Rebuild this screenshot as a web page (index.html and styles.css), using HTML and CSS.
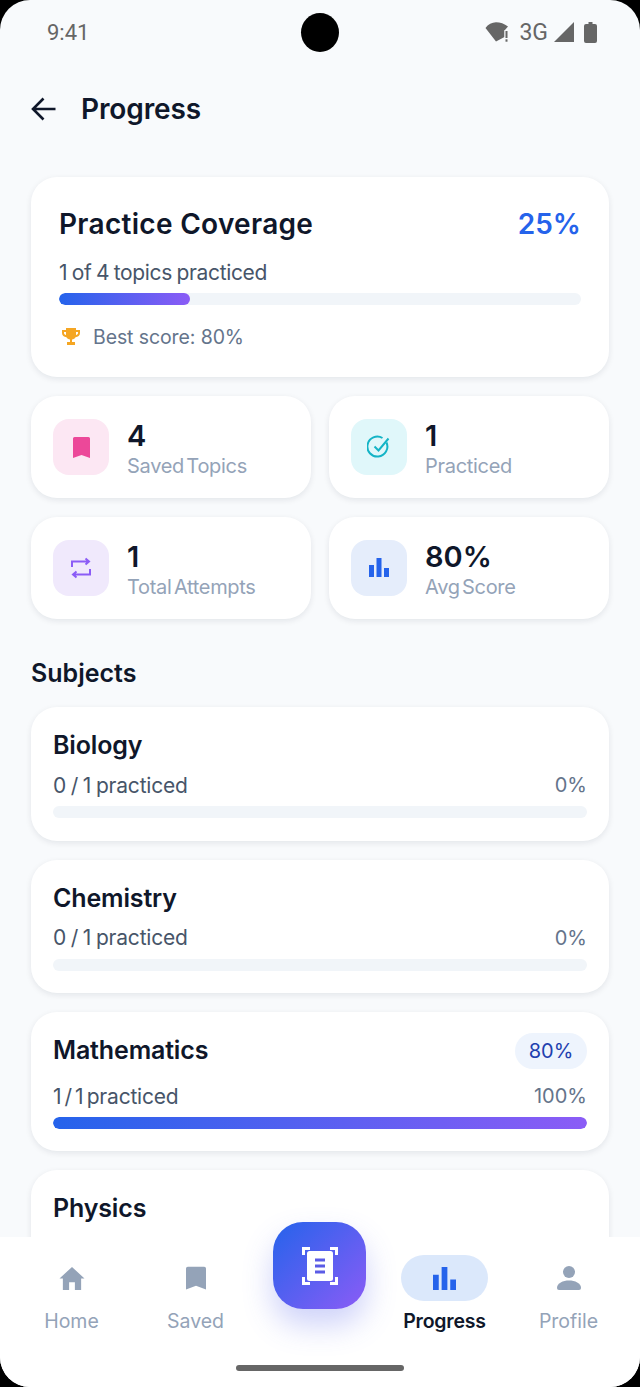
FILE: index.html
```html
<!DOCTYPE html>
<html lang="en">
<head>
<meta charset="utf-8">
<title>Progress</title>
<link rel="stylesheet" href="styles.css">
</head>
<body>
<div class="screen">
  <div class="status">
    <span class="time">9:41</span>
    <span class="camera"></span>
    <span class="status-icons">
      <svg class="wifi" width="24" height="20" viewBox="0 0 24 20"><path d="M0.500 6C3 2.500 7 0.300 11 0.300S19.500 1.800 23 4.500L19.500 8.500V15L11 19.500Z" fill="#666"/><path d="M19.500 8H24V20H19.500Z" fill="#f8fafc"/><rect x="20.500" y="9" width="2" height="7" fill="#666"/><rect x="20.500" y="17.300" width="2" height="2.400" fill="#666"/></svg>
      <span class="network">3G</span>
      <svg class="signal" width="20" height="20" viewBox="0 0 20 20"><path d="M20 0V20H0Z" fill="#666"/></svg>
      <svg class="battery" width="13" height="21" viewBox="0 0 13 21"><path d="M4.500 0H8.500V2H11Q13 2 13 4V19Q13 21 11 21H2Q0 21 0 19V4Q0 2 2 2H4.500Z" fill="#666"/></svg>
    </span>
  </div>
  <main class="content">
    <header class="page-head">
      <svg class="back" width="26" height="26" viewBox="0 0 26 26"><path d="M24.500 13H3M12.500 2.500 2 13l10.500 10.500" fill="none" stroke="#0f172a" stroke-width="2.600"/></svg>
      <h1>Progress</h1>
    </header>

    <section class="card hero">
      <div class="hero-top"><h2>Practice Coverage</h2><span class="hero-pct">25%</span></div>
      <p class="hero-sub">1 of 4 topics practiced</p>
      <div class="track hero-track"><div class="fill" style="width:25%"></div></div>
      <div class="best">
        <svg width="18" height="20" viewBox="0 0 18 20"><path d="M4 1H14V3H18V6C18 8.500 16 10 13.500 10.200 12.800 11.500 11.500 12.300 10 12.600V15H13V18H5V15H8V12.600C6.500 12.300 5.200 11.500 4.500 10.200 2 10 0 8.500 0 6V3H4ZM2 5V6C2 7 2.800 7.800 4 8.100V5ZM16 5H14V8.100C15.200 7.800 16 7 16 6Z" fill="#f5a623"/></svg>
        <span>Best score: 80%</span>
      </div>
    </section>

    <section class="stats">
      <div class="card stat">
        <span class="stat-icon pink"><svg width="17" height="21" viewBox="0 0 17 21"><path d="M1.500 0H15.500Q17 0 17 1.500V21L8.500 18 0 21V1.500Q0 0 1.500 0Z" fill="#ec4899"/></svg></span>
        <div class="stat-text"><strong>4</strong><span>Saved Topics</span></div>
      </div>
      <div class="card stat">
        <span class="stat-icon cyan"><svg width="24" height="24" viewBox="0 0 24 24"><path d="M19.500 7.500A10 10 0 1 1 15.500 3" fill="none" stroke="#14b4c6" stroke-width="2"/><path d="M7.500 11.500 11.500 15.500 21.500 3.500" fill="none" stroke="#14b4c6" stroke-width="2"/></svg></span>
        <div class="stat-text"><strong>1</strong><span>Practiced</span></div>
      </div>
      <div class="card stat">
        <span class="stat-icon violet"><svg width="22" height="24" viewBox="0 0 22 24"><path d="M2 11V5.500H18M15.500 2.500 19 5.500 15.500 8.500M20 13V18.500H4M6.500 15.500 3 18.500 6.500 21.500" fill="none" stroke="#8b5cf6" stroke-width="2"/></svg></span>
        <div class="stat-text"><strong>1</strong><span>Total Attempts</span></div>
      </div>
      <div class="card stat">
        <span class="stat-icon blue"><svg width="20" height="20" viewBox="0 0 20 20"><path d="M0 7H5V19H0ZM7.500 0H12.500V19H7.500ZM15 10H20V19H15Z" fill="#2563eb"/></svg></span>
        <div class="stat-text"><strong>80%</strong><span>Avg Score</span></div>
      </div>
    </section>

    <h3 class="section-title">Subjects</h3>

    <section class="subjects">
      <article class="card subject">
        <div class="subject-top"><h4>Biology</h4></div>
        <div class="subject-meta"><span>0 / 1 practiced</span><span class="meta-pct">0%</span></div>
        <div class="track"></div>
      </article>
      <article class="card subject">
        <div class="subject-top"><h4>Chemistry</h4></div>
        <div class="subject-meta"><span>0 / 1 practiced</span><span class="meta-pct">0%</span></div>
        <div class="track"></div>
      </article>
      <article class="card subject has-badge">
        <div class="subject-top"><h4>Mathematics</h4><span class="badge">80%</span></div>
        <div class="subject-meta"><span>1 / 1 practiced</span><span class="meta-pct">100%</span></div>
        <div class="track"><div class="fill" style="width:100%"></div></div>
      </article>
      <article class="card subject">
        <div class="subject-top"><h4>Physics</h4></div>
      </article>
    </section>
  </main>

  <nav class="tabbar">
    <div class="tabs">
      <a class="tab"><span class="tab-icon"><svg width="28" height="25" viewBox="0 0 28 26"><path d="M14 1 27 13H23.500V25H17V17H11V25H4.500V13H1Z" fill="#94a3b8"/></svg></span><span class="tab-label">Home</span></a>
      <a class="tab"><span class="tab-icon"><svg width="20" height="25" viewBox="0 0 22 26"><path d="M2 0H20Q22 0 22 2V25L11 21 0 25V2Q0 0 2 0Z" fill="#94a3b8"/></svg></span><span class="tab-label">Saved</span></a>
      <span class="tab tab-spacer"></span>
      <a class="tab active"><span class="tab-icon"><svg width="23" height="23" viewBox="0 0 24 24"><path d="M0 8H6V24H0ZM9 0H15V24H9ZM18 13H24V24H18Z" fill="#2563eb"/></svg></span><span class="tab-label">Progress</span></a>
      <a class="tab"><span class="tab-icon"><svg width="24" height="24" viewBox="0 0 24 24"><circle cx="12" cy="6" r="6" fill="#94a3b8"/><path d="M2 24Q0 24 0 22C0 17 6 14.500 12 14.500S24 17 24 22Q24 24 22 24Z" fill="#94a3b8"/></svg></span><span class="tab-label">Profile</span></a>
    </div>
    <button class="fab" aria-label="Scan">
      <svg width="36" height="38" viewBox="0 0 36 38" fill="none">
        <path d="M1.500 8V1.500H8M28 1.500H34.500V8M1.500 30V36.500H8M28 36.500H34.500V30" stroke="#fff" stroke-width="3"/>
        <rect x="5" y="4" width="26" height="30" rx="2.500" fill="#fff"/>
        <path d="M13 13H23M13 19H23M13 25H23" stroke="#5a5be6" stroke-width="3"/>
      </svg>
    </button>
    <div class="home-indicator"></div>
  </nav>
</div>
</body>
</html>
```
FILE: styles.css
```css
* { box-sizing: border-box; margin: 0; padding: 0; }
html, body { height: 100%; background: #000; overflow: hidden; }
body { font-family: "Inter", "Liberation Sans", sans-serif; color: #0f172a; }
.screen {
  position: relative;
  width: 640px;
  height: 1387px;
  background: #f8fafc;
  border-radius: 30px;
  overflow: hidden;
  display: flex;
  flex-direction: column;
}
.status {
  position: relative;
  flex: none;
  height: 64px;
  display: flex;
  align-items: center;
  justify-content: space-between;
  padding: 0 43px 0 47px;
  color: #666;
  font-family: "Roboto", sans-serif;
  font-size: 22px;
}
.camera {
  position: absolute;
  left: 301px;
  top: 13px;
  width: 38px;
  height: 39px;
  border-radius: 50%;
  background: #000;
}
.status-icons { display: flex; align-items: center; gap: 6px; }
.network { margin-left: 4px; font-size: 23px; }
.battery { margin-left: 4px; }
.content { flex: 1; min-height: 0; overflow: hidden; padding: 0 31px; }
.page-head { display: flex; align-items: center; gap: 24px; height: 90px; }
.page-head h1 { font-size: 28px; font-weight: 600; letter-spacing: -0.1px; }
.card {
  background: #fff;
  border-radius: 26px;
  box-shadow: 0 2px 6px rgba(15, 23, 42, 0.09);
}
.hero { margin-top: 23px; height: 200px; padding: 27px 28px 0 28px; }
.hero-top { display: flex; justify-content: space-between; align-items: center; height: 40px; }
.hero-top h2 { font-size: 28px; font-weight: 600; letter-spacing: 0.3px; }
.hero-pct { font-size: 28px; font-weight: 600; color: #2563eb; }
.hero-sub { margin-top: 15px; font-size: 21px; line-height: 28px; color: #475569; letter-spacing: -0.35px; word-spacing: -1px; }
.track { height: 12px; border-radius: 6px; background: #f1f5f9; overflow: hidden; }
.hero-track { margin-top: 6px; }
.fill { height: 100%; border-radius: 6px; background: linear-gradient(90deg, #2563eb, #8b5cf6); }
.best { display: flex; align-items: center; gap: 13px; margin-top: 20px; margin-left: 3px; font-size: 19.500px; color: #64748b; letter-spacing: -0.1px; }
.stats { display: grid; grid-template-columns: 280px 280px; gap: 19px 18px; margin-top: 19px; }
.stat { height: 102px; display: flex; align-items: center; gap: 18px; padding: 0 22px; }
.stat-icon { flex: none; width: 56px; height: 56px; border-radius: 16px; display: flex; align-items: center; justify-content: center; }
.pink { background: #fce7f3; }
.cyan { background: #e0f7fa; }
.violet { background: #f0e9fc; }
.blue { background: #e5edfb; }
.stat-text { display: flex; flex-direction: column; padding-top: 3px; }
.stat-text strong { font-size: 29px; line-height: 34px; font-weight: 600; }
.stat-text span { font-size: 20px; line-height: 26px; color: #94a3b8; letter-spacing: -0.3px; word-spacing: -3px; }
.section-title { margin-top: 34px; font-size: 25px; line-height: 40px; font-weight: 600; letter-spacing: 0; }
.subjects { display: flex; flex-direction: column; gap: 19px; margin-top: 14px; }
.subject { height: 133.500px; padding: 18px 22px 0; }
.subject.has-badge { height: 139px; padding-top: 21px; }
.subject-top { display: flex; justify-content: space-between; align-items: center; height: 40px; }
.has-badge .subject-top { height: 36px; }
.subject-top h4 { font-size: 25px; font-weight: 600; letter-spacing: -0.15px; }
.has-badge h4 { margin-bottom: 2px; }
.badge { width: 72px; height: 36px; border-radius: 18px; background: #eef4fd; color: #1e40af; font-size: 20px; display: flex; align-items: center; justify-content: center; }
.subject-meta { display: flex; justify-content: space-between; align-items: center; height: 28px; margin-top: 6px; font-size: 21px; color: #475569; letter-spacing: -0.2px; word-spacing: -1px; }
.has-badge .subject-meta { margin-top: 13px; word-spacing: -2.500px; }
.meta-pct { font-size: 20px; color: #64748b; letter-spacing: 0; }
.subject .track { margin-top: 7px; }
.tabbar { position: relative; flex: none; height: 150px; background: #fff; }
.tabs { display: grid; grid-template-columns: 143px 105px 144px 105px 143px; padding-top: 18px; }
.tab { display: flex; flex-direction: column; align-items: center; }
.tab-icon { width: 87px; height: 46px; border-radius: 23px; display: flex; align-items: center; justify-content: center; }
.tab-label { margin-top: 7px; font-size: 19.500px; line-height: 26px; color: #94a3b8; }
.active .tab-icon { background: #dbe8fb; }
.active .tab-label { color: #0f172a; font-weight: 600; letter-spacing: -0.2px; }
.fab {
  position: absolute;
  left: 273px;
  top: -15px;
  width: 93px;
  height: 87px;
  border: 0;
  border-radius: 30px;
  background: linear-gradient(135deg, #2563eb, #8b5cf6);
  box-shadow: 0 16px 30px rgba(79, 92, 235, 0.28);
  display: flex;
  align-items: center;
  justify-content: center;
}
.home-indicator { position: absolute; left: 236px; top: 128px; width: 168px; height: 6px; border-radius: 3px; background: #666; }
```
